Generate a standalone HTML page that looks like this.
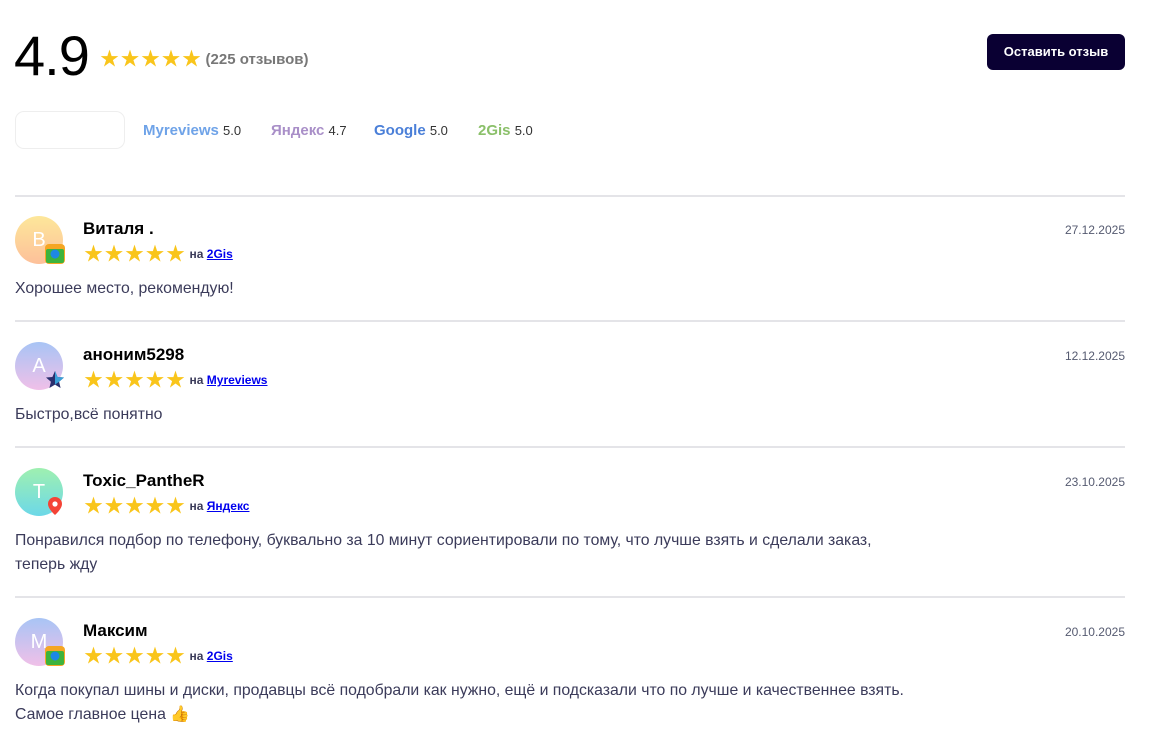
<!DOCTYPE html>
<html><head><meta charset="utf-8"><style>
*{margin:0;padding:0;box-sizing:border-box}
body{width:1154px;height:746px;background:#fff;font-family:"Liberation Sans","Noto Sans CJK SC",sans-serif;position:relative;overflow:hidden}
.a{position:absolute}
.big{left:14px;top:26px;font-size:56px;line-height:60px;color:#000;letter-spacing:-1px}
.st{color:#f9c51b;letter-spacing:1.5px}
.btn{left:987px;top:34px;width:138px;height:36px;background:#0a0033;border-radius:6px;color:#fff;font-size:13px;font-weight:bold;text-align:center;line-height:36px}
.tabbox{left:15px;top:111px;width:110px;height:38px;border:1px solid #eee;border-radius:9px}
.tab{top:121px;font-size:15px;font-weight:bold;line-height:20px}
.tab span{color:#333;font-weight:normal;font-size:13px}
.hr{left:15px;width:1110px;height:2px;background:#e4e4e8}
.av{left:15px;width:48px;height:48px;border-radius:50%;color:#fff;font-size:20px;text-align:center;line-height:48px}
.badge{position:absolute;left:30px;top:28px;width:20px;height:20px}
.nm{left:83px;font-size:17px;font-weight:bold;color:#000;line-height:22px}
.rs{left:84px;font-size:19px;line-height:22px}
.on{font-size:12px;font-weight:bold;color:#3b3b5a;margin-left:3px;vertical-align:2px}
.on a{color:#0000ee;text-decoration:underline}
.dt{right:29px;font-size:12px;color:#555a70;line-height:16px}
.tx{left:15px;font-size:15.8px;color:#3b3b5a;line-height:24px}
</style></head><body>
<div class="a big">4.9</div>
<div class="a" style="left:100px;top:48px;font-size:19px;line-height:24px"><span class="st">★★★★★</span><span style="font-size:15px;color:#777;font-weight:bold;vertical-align:1px;margin-left:3px">(225 отзывов)</span></div>
<div class="a btn">Оставить отзыв</div>
<div class="a tabbox"></div>
<div class="a tab" style="left:143px;color:#6fa3e8">Myreviews <span>5.0</span></div>
<div class="a tab" style="left:271px;color:#a98fc8">Яндекс <span>4.7</span></div>
<div class="a tab" style="left:374px;color:#4a7fd8">Google <span>5.0</span></div>
<div class="a tab" style="left:478px;color:#8bc06a">2Gis <span>5.0</span></div>

<div class="a hr" style="top:195px"></div>

<div class="a av" style="top:216px;background:linear-gradient(180deg,#fde79a,#fdc09a)">В<svg class="badge" viewBox="0 0 20 20"><rect x="0" y="0" width="20" height="20" rx="4" fill="#f5a623"/><rect x="1" y="5" width="18" height="14" rx="2" fill="#3db33d"/><circle cx="10" cy="10" r="4.5" fill="#1e88e5"/><path d="M10 15l-2-3h4z" fill="#1e88e5"/></svg></div>
<div class="a nm" style="top:218px">Виталя .</div>
<div class="a rs" style="top:243px"><span class="st">★★★★★</span><span class="on">на <a>2Gis</a></span></div>
<div class="a dt" style="top:222px">27.12.2025</div>
<div class="a tx" style="top:277px">Хорошее место, рекомендую!</div>
<div class="a hr" style="top:320px"></div>

<div class="a av" style="top:342px;background:linear-gradient(180deg,#a8c4f5,#f0c0e8)">А<svg class="badge" viewBox="0 0 20 20"><path d="M10 1l2.6 6 6.4.5-4.9 4.2 1.5 6.3L10 14.6 4.4 18l1.5-6.3L1 7.5 7.4 7z" fill="#2a2f6e"/><path d="M10 1l2.6 6 6.4.5-4.9 4.2L10 14.6z" fill="#3aa0d8"/></svg></div>
<div class="a nm" style="top:344px">аноним5298</div>
<div class="a rs" style="top:369px"><span class="st">★★★★★</span><span class="on">на <a>Myreviews</a></span></div>
<div class="a dt" style="top:348px">12.12.2025</div>
<div class="a tx" style="top:403px">Быстро,всё понятно</div>
<div class="a hr" style="top:446px"></div>

<div class="a av" style="top:468px;background:linear-gradient(180deg,#9ff0b0,#6cd8e8)">Т<svg class="badge" viewBox="0 0 20 20"><path d="M10 1a7 7 0 0 0-7 7c0 5 7 11 7 11s7-6 7-11a7 7 0 0 0-7-7z" fill="#f44336"/><circle cx="10" cy="8" r="2.6" fill="#fff"/></svg></div>
<div class="a nm" style="top:470px">Toxic_PantheR</div>
<div class="a rs" style="top:495px"><span class="st">★★★★★</span><span class="on">на <a>Яндекс</a></span></div>
<div class="a dt" style="top:474px">23.10.2025</div>
<div class="a tx" style="top:529px">Понравился подбор по телефону, буквально за 10 минут сориентировали по тому, что лучше взять и сделали заказ,<br>теперь жду</div>
<div class="a hr" style="top:596px"></div>

<div class="a av" style="top:618px;background:linear-gradient(180deg,#a8c4f5,#f0c0e8)">М<svg class="badge" viewBox="0 0 20 20"><rect x="0" y="0" width="20" height="20" rx="4" fill="#f5a623"/><rect x="1" y="5" width="18" height="14" rx="2" fill="#3db33d"/><circle cx="10" cy="10" r="4.5" fill="#1e88e5"/><path d="M10 15l-2-3h4z" fill="#1e88e5"/></svg></div>
<div class="a nm" style="top:620px">Максим</div>
<div class="a rs" style="top:645px"><span class="st">★★★★★</span><span class="on">на <a>2Gis</a></span></div>
<div class="a dt" style="top:624px">20.10.2025</div>
<div class="a tx" style="top:679px">Когда покупал шины и диски, продавцы всё подобрали как нужно, ещё и подсказали что по лучше и качественнее взять.<br>Самое главное цена <span style="color:#f0a030">👍</span></div>
</body></html>
